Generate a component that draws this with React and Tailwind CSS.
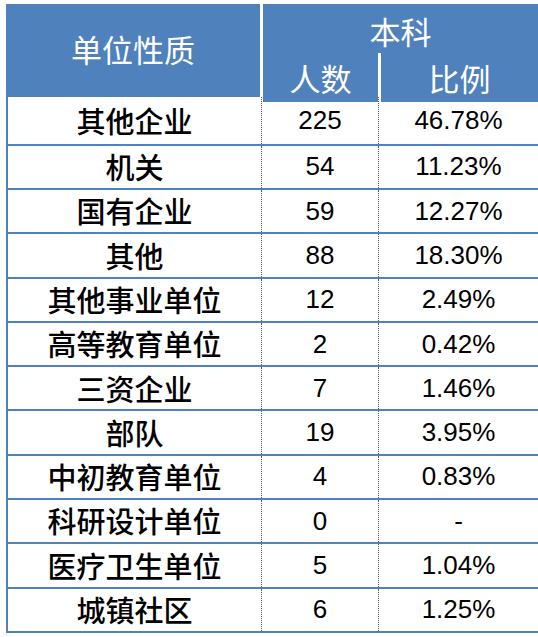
const rows = [
  ['其他企业', '225', '46.78%'],
  ['机关', '54', '11.23%'],
  ['国有企业', '59', '12.27%'],
  ['其他', '88', '18.30%'],
  ['其他事业单位', '12', '2.49%'],
  ['高等教育单位', '2', '0.42%'],
  ['三资企业', '7', '1.46%'],
  ['部队', '19', '3.95%'],
  ['中初教育单位', '4', '0.83%'],
  ['科研设计单位', '0', '-'],
  ['医疗卫生单位', '5', '1.04%'],
  ['城镇社区', '6', '1.25%'],
];

const cjk = { fontFamily: '"Noto Sans CJK SC", sans-serif' };
const num = { fontFamily: '"Liberation Sans", Arial, sans-serif' };

const App = () => {
  return (
    <div className="w-[538px] h-[637px] bg-white pt-[4px] pl-[6px] overflow-hidden">
      {/* header */}
      <div className="flex h-[93px] w-[532px]">
        <div
          className="w-[254px] bg-[#4f81bd] flex items-center justify-center text-white text-[31px] pb-[2px]"
          style={cjk}
        >
          单位性质
        </div>
        <div className="w-[3px] bg-white" />
        <div className="flex-1 flex flex-col">
          <div
            className="h-[49px] bg-[#4f81bd] flex items-center justify-center text-white text-[31px] pt-[6px]"
            style={cjk}
          >
            本科
          </div>
          <div className="h-[3px] bg-white" />
          <div className="flex-1 flex">
            <div
              className="w-[115px] bg-[#4f81bd] flex items-center justify-center text-white text-[31px] pt-[2px]"
              style={cjk}
            >
              人数
            </div>
            <div className="w-[3px] bg-white" />
            <div
              className="flex-1 bg-[#4f81bd] flex items-center justify-center text-white text-[31px] pt-[2px]"
              style={cjk}
            >
              比例
            </div>
          </div>
        </div>
      </div>

      {/* body */}
      <div className="w-[532px] border-l-[2.7px] border-[#4f81bd]">
        {rows.map(([name, count, pct], i) => (
          <div
            key={name}
            className={
              'flex border-b-[2.5px] border-[#4f81bd] ' +
              (i === 0 ? 'h-[48.7px]' : 'h-[44.3px]')
            }
          >
            <div
              className="w-[253px] flex items-center justify-center text-[29px] font-medium text-black"
              style={cjk}
            >
              {name}
            </div>
            <div className="w-[117px] border-l border-dotted border-[#555] flex items-center justify-center text-[26px] text-black" style={num}>
              {count}
            </div>
            <div className="flex-1 border-l border-dotted border-[#555] flex items-center justify-center text-[26px] text-black" style={num}>
              {pct}
            </div>
          </div>
        ))}
      </div>
    </div>
  );
};

export default App;
